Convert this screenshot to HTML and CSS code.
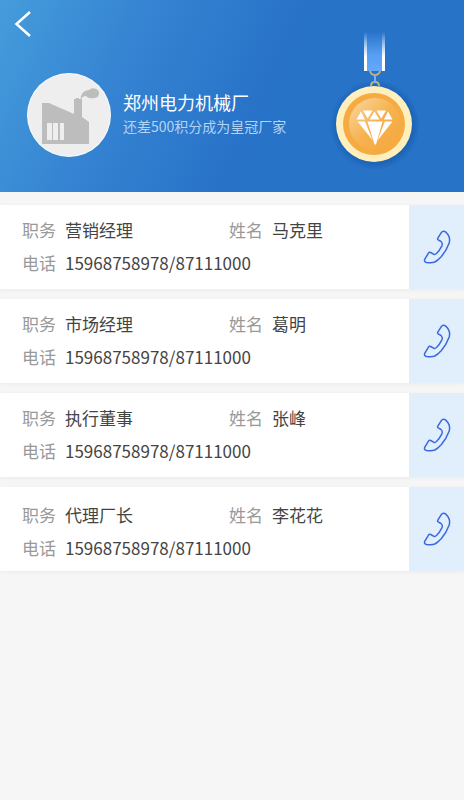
FILE: index.html
```html
<!DOCTYPE html>
<html lang="zh-CN">
<head>
<meta charset="utf-8">
<meta name="viewport" content="width=device-width, initial-scale=1">
<title>郑州电力机械厂</title>
<link rel="stylesheet" href="styles.css">
</head>
<body>
<svg class="symbols" aria-hidden="true">
  <symbol id="phone" viewBox="0 0 28 34">
    <path d="M18.600 2.200Q20.500.6 22.500 1.900Q25.300 4.300 26.200 7.300Q27 10 26.200 13Q23.500 20.500 18.200 26.700Q14.800 30.400 11.800 32Q9 33.200 3.600 32.500Q.8 31.600 1.700 29.400L5.300 23.300Q6.200 21.800 7.700 22.500L10.600 24.200Q12 24.800 13.500 23.500Q16.500 20.500 18.900 15.800Q19.900 13 18 11.500L15.200 9.900Q14.200 9.200 14.800 8.200Z"/>
  </symbol>
</svg>
<header class="hero">
  <button class="back" type="button" aria-label="返回">
    <svg class="back-icon" viewBox="0 0 18 28" aria-hidden="true"><path d="M16 2 2.500 14 16 26"/></svg>
  </button>
  <div class="profile">
    <svg class="avatar" viewBox="0 0 84 84" aria-hidden="true">
      <circle cx="42" cy="42" r="42" fill="#fafcfd"/>
      <circle cx="42" cy="42" r="41" fill="#eee"/>
      <path fill="#bdbdbd" d="M15 30h7l25 11V26h2v-1h3v1h3v18l7 5v22H15zM20 50v17h5V50zm6 0v17h5V50zm7 0v17h4V50z" fill-rule="evenodd"/>
      <path fill="#bdbdbd" d="M53 28Q54 17 62 17Q65 14 69 16Q72 17 72 20Q72 25 67 25Q61 26 59 23Q55 23 53 28Z"/>
    </svg>
    <div class="company">
      <h1 class="name">郑州电力机械厂</h1>
      <p class="hint">还差500积分成为皇冠厂家</p>
    </div>
  </div>
  <svg class="medal" viewBox="0 0 90 135" aria-hidden="true">
    <defs>
      <linearGradient id="ribbon" x1="0" y1="0" x2="0" y2="1"><stop offset="0" stop-color="#2873c8"/><stop offset=".6" stop-color="#58a0f4"/><stop offset="1" stop-color="#62a8fb"/></linearGradient>
      <linearGradient id="edge" x1="0" y1="0" x2="0" y2="1"><stop offset="0" stop-color="#fff" stop-opacity="0"/><stop offset=".65" stop-color="#fff"/></linearGradient>
      <linearGradient id="gold" x1="0" y1="0" x2="1" y2="1"><stop offset="0" stop-color="#f8d9a4"/><stop offset=".5" stop-color="#f7b250"/><stop offset="1" stop-color="#f5a63a"/></linearGradient>
      <radialGradient id="halo"><stop offset=".84" stop-color="#1456a8" stop-opacity=".55"/><stop offset="1" stop-color="#1456a8" stop-opacity="0"/></radialGradient>
    </defs>
    <circle cx="45" cy="95" r="45" fill="url(#halo)"/>
    <path fill="url(#ribbon)" d="M34 2h21v39H34z"/>
    <path fill="url(#edge)" d="M34 2h3v39h-3zM52 2h3v39h-3z"/>
    <g fill="none" stroke="#c5ae72" stroke-width="2">
      <path d="M40 41q1 4 5 4t5-4M41 56q0-4 4-4t4 4"/>
    </g>
    <path stroke="#79aefb" stroke-width="2" d="M45 45v8"/>
    <circle cx="44" cy="94" r="38" fill="#feefbd"/>
    <circle cx="44" cy="94" r="31" fill="#f6aa42"/>
    <circle cx="45" cy="94" r="26" fill="url(#gold)"/>
    <g fill="#fff">
      <path d="M31 81.500 26.500 89.500H35zM33 80.500h9.500l-4.800 8zM44.500 81.500l-5 8h10zM46.500 80.500H56l-4.800 8zM58 81.500l-4 8h8.500z"/>
      <path d="M27.500 91.500H35L42.500 110zM37.500 91.500h15L46 114.500h-1.500zM54.800 91.500h7.700L47.500 110.500z"/>
    </g>
  </svg>
</header>
<main class="contacts">
  <article class="contact">
    <dl class="details">
      <div class="field"><dt>职务</dt><dd>营销经理</dd></div>
      <div class="field"><dt>姓名</dt><dd>马克里</dd></div>
      <div class="field wide"><dt>电话</dt><dd>15968758978/87111000</dd></div>
    </dl>
    <a class="call" href="tel:15968758978" aria-label="拨打马克里的电话"><svg class="call-icon" aria-hidden="true"><use href="#phone"/></svg></a>
  </article>
  <article class="contact">
    <dl class="details">
      <div class="field"><dt>职务</dt><dd>市场经理</dd></div>
      <div class="field"><dt>姓名</dt><dd>葛明</dd></div>
      <div class="field wide"><dt>电话</dt><dd>15968758978/87111000</dd></div>
    </dl>
    <a class="call" href="tel:15968758978" aria-label="拨打葛明的电话"><svg class="call-icon" aria-hidden="true"><use href="#phone"/></svg></a>
  </article>
  <article class="contact">
    <dl class="details">
      <div class="field"><dt>职务</dt><dd>执行董事</dd></div>
      <div class="field"><dt>姓名</dt><dd>张峰</dd></div>
      <div class="field wide"><dt>电话</dt><dd>15968758978/87111000</dd></div>
    </dl>
    <a class="call" href="tel:15968758978" aria-label="拨打张峰的电话"><svg class="call-icon" aria-hidden="true"><use href="#phone"/></svg></a>
  </article>
  <article class="contact">
    <dl class="details">
      <div class="field"><dt>职务</dt><dd>代理厂长</dd></div>
      <div class="field"><dt>姓名</dt><dd>李花花</dd></div>
      <div class="field wide"><dt>电话</dt><dd>15968758978/87111000</dd></div>
    </dl>
    <a class="call" href="tel:15968758978" aria-label="拨打李花花的电话"><svg class="call-icon" aria-hidden="true"><use href="#phone"/></svg></a>
  </article>
</main>
</body>
</html>
```
FILE: styles.css
```css
* {
  box-sizing: border-box;
}

body {
  margin: 0;
  background: #f6f6f6;
  color: #444;
  font-family: "Noto Sans CJK SC", sans-serif;
  font-size: 17px;
}

.symbols {
  display: none;
}

.hero {
  display: grid;
  grid-template-columns: 1fr auto;
  grid-template-rows: 73px auto;
  padding-bottom: 27px;
  background: linear-gradient(115deg, #459cdb 0%, #3583d2 28%, #2873c8 55%, #2673c8 100%);
}

.back {
  justify-self: start;
  align-self: start;
  margin: 10px 0 0 14px;
  padding: 0;
  border: 0;
  background: none;
  cursor: pointer;
}

.back-icon {
  display: block;
  width: 18px;
  height: 28px;
  fill: none;
  stroke: #fff;
  stroke-width: 2.5;
}

.profile {
  grid-row: 2;
  display: flex;
  align-items: flex-start;
  gap: 12px;
  padding-left: 27px;
}

.avatar {
  flex: none;
  width: 84px;
  height: 84px;
}

.company {
  padding-top: 16px;
  color: #fff;
}

.name {
  margin: 0;
  font-size: 18px;
  font-weight: 400;
  line-height: 26px;
}

.hint {
  margin: 0;
  color: #b5d3f4;
  font-size: 14px;
  line-height: 22px;
}

.medal {
  grid-column: 2;
  grid-row: 1 / 3;
  width: 90px;
  height: 135px;
  margin: 30px 44px 0 0;
  align-self: start;
  overflow: visible;
}

.contacts {
  display: grid;
  gap: 10px;
  padding: 13px 0;
}

.contact {
  display: flex;
  background: #fff;
  box-shadow: 0 1px 4px rgba(0, 0, 0, 0.05);
}

.details {
  flex: 1;
  display: grid;
  grid-template-columns: 207fr 180fr;
  margin: 0;
  padding: 8px 0 10px 22px;
  line-height: 33px;
}

.contact:last-child .details {
  padding-top: 11px;
  padding-bottom: 7px;
}

.field {
  display: flex;
  gap: 9px;
}

.wide {
  grid-column: 1 / 3;
}

dt {
  color: #999;
}

dd {
  margin: 0;
}

.call {
  flex: none;
  display: flex;
  align-items: center;
  justify-content: center;
  width: 55px;
  background: #e1effd;
}

.call-icon {
  width: 28px;
  height: 34px;
  fill: none;
  stroke: #3a68e0;
  stroke-width: 1.5;
  stroke-linejoin: round;
}
```
